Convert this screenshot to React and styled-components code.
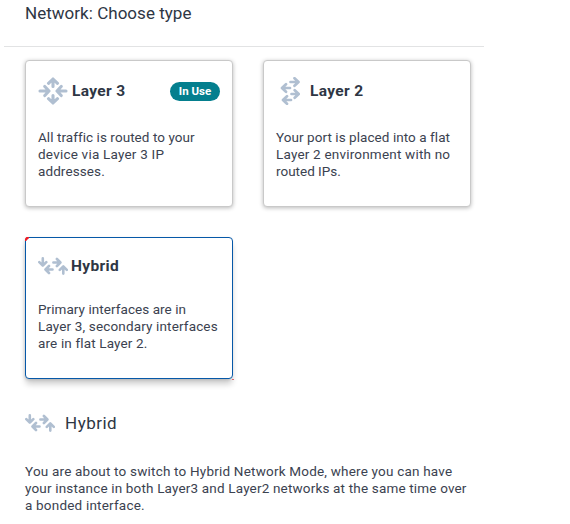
import React from "react";
import styled, { createGlobalStyle } from "styled-components";

const GlobalStyle = createGlobalStyle`
  * { box-sizing: border-box; }
  body {
    margin: 0;
    background: #fff;
    color: #2e3644;
    font-family: Roboto, "Liberation Sans", sans-serif;
    overflow: hidden;
  }
  h1, h2, h3, p { margin: 0; }
`;

const Page = styled.main`
  width: 570px;
  height: 524px;
  overflow: hidden;
`;

const Header = styled.header`
  width: 480px;
  height: 47px;
  margin-left: 4px;
  padding: 3px 0 0 21px;
  border-bottom: 1px solid #e2e3e4;
`;

const Title = styled.h1`
  font-size: 17px;
  font-weight: 400;
  line-height: 20px;
  letter-spacing: 0.03px;
`;

const CardGrid = styled.section`
  display: grid;
  grid-template-columns: 208px 208px;
  grid-template-rows: 147px 142px;
  gap: 30px;
  padding: 13px 0 0 25px;
`;

const Card = styled.article`
  position: relative;
  padding: ${(p) => (p.$selected ? "12px" : "14px")} 12px 0;
  border: 1px solid ${(p) => (p.$selected ? "#0658a8" : "#c9c9c9")};
  border-radius: 4px;
  background: #fff;
  box-shadow: ${(p) =>
    p.$selected ? "0 6px 6px -1px rgba(0,0,0,.2), -1px 1px 3px rgba(0,0,0,.12)" : "0 1px 4px rgba(0,0,0,.28)"};
`;

const CornerMark = styled.svg`
  position: absolute;
  width: 4px;
  height: 4px;
  ${(p) => (p.$end ? "right: -2px; bottom: -2px;" : "left: -1px; top: -1px;")}
`;

const CardHeader = styled.div`
  display: flex;
  align-items: center;
  height: 32px;
  padding-left: ${(p) => p.$indent || 0}px;
`;

const CardTitle = styled.h2`
  margin-left: ${(p) => p.$gap}px;
  font-size: 15.5px;
  font-weight: 700;
  line-height: 20px;
  letter-spacing: ${(p) => p.$spacing}px;
`;

const Badge = styled.span`
  display: flex;
  align-items: center;
  justify-content: center;
  width: 50px;
  height: 19px;
  margin-left: auto;
  border-radius: 10px;
  background: #047f8e;
  color: #fff;
  font-size: 11.5px;
  font-weight: 700;
`;

const Copy = styled.p`
  margin-top: ${(p) => p.$top}px;
  color: #3b4250;
  font-size: 13.5px;
  line-height: 17px;
`;

const Line = styled.span`
  display: block;
  width: max-content;
  white-space: nowrap;
  letter-spacing: ${(p) => p.$spacing}px;
`;

const Details = styled.section`
  padding: 28px 0 0 25px;
`;

const DetailsHeader = styled.div`
  display: flex;
  align-items: center;
  height: 32px;
`;

const DetailsTitle = styled.h2`
  margin-left: 10px;
  font-size: 17px;
  font-weight: 400;
  line-height: 20px;
  letter-spacing: 0.5px;
`;

const Glyph = styled.svg`
  flex: none;
  fill: none;
  stroke: #b0bfd1;
  stroke-width: ${(p) => p.$weight || 3.1};
  stroke-linecap: round;
  stroke-linejoin: round;
`;

const RoutedIcon = () => (
  <Glyph width="30" height="28" viewBox="0 0 30 28">
    <path d="M15 9.5V2.5M10.5 6.3L15 2l4.5 4.3M15 18.5v7M10.5 21.7L15 26l4.5-4.3M2 14h8M6.8 9.5l4.2 4.5-4.2 4.5M28 14h-8M23.2 9.5L19 14l4.2 4.5" />
  </Glyph>
);

const SwitchedIcon = () => (
  <Glyph width="20" height="28" viewBox="0 0 20 28" $weight={2.7}>
    <path d="M10.5 5h7.5M14.5 1.2L18.5 5l-4 3.8M10 11H2.5M6 7.2L2 11l4 3.8M11.5 17h7M14.7 13.2l4 3.8-4 3.8M11 23H3.5M7 19.2L3 23l4 3.8" />
  </Glyph>
);

const HybridIcon = () => (
  <Glyph width="30" height="18" viewBox="0 0 30 18" $weight={2.6}>
    <path d="M4.8 1.4v7M1.3 5.2l3.5 3.5 3.5-3.5M14.5 12.5H8.2M11 9L7.5 12.5 11 16M15.4 5.5h6.5M18.9 2l3.5 3.5L18.9 9M25.3 16.6V9.6M21.8 12.9l3.5-3.5 3.5 3.5" />
  </Glyph>
);

const Lines = ({ items, top }) => (
  <Copy $top={top}>
    {items.map(([text, spacing]) => (
      <Line key={text} $spacing={spacing}>{text}</Line>
    ))}
  </Copy>
);

export default function App() {
  return (
    <Page>
      <GlobalStyle />
      <Header>
        <Title>Network: Choose type</Title>
      </Header>
      <CardGrid>
        <Card>
          <CardHeader>
            <RoutedIcon />
            <CardTitle $gap={4} $spacing={0.35}>Layer 3</CardTitle>
            <Badge>In Use</Badge>
          </CardHeader>
          <Lines top={22} items={[["All traffic is routed to your", 0.06], ["device via Layer 3 IP", 0.22], ["addresses.", 0.1]]} />
        </Card>
        <Card>
          <CardHeader $indent={4}>
            <SwitchedIcon />
            <CardTitle $gap={10} $spacing={0.35}>Layer 2</CardTitle>
          </CardHeader>
          <Lines top={22} items={[["Your port is placed into a flat", 0.06], ["Layer 2 environment with no", 0.2], ["routed IPs.", 0]]} />
        </Card>
        <Card $selected>
          <CornerMark viewBox="0 0 4 4"><path d="M0 4V1.5L1.5 0H4V1L1 4Z" fill="#ee1c25" /></CornerMark>
          <CornerMark $end viewBox="0 0 4 4"><path d="M2 3h2v1H2Z" fill="#d86a70" /></CornerMark>
          <CardHeader>
            <HybridIcon />
            <CardTitle $gap={3} $spacing={0.35}>Hybrid</CardTitle>
          </CardHeader>
          <Lines top={19} items={[["Primary interfaces are in", 0.06], ["Layer 3, secondary interfaces", 0.15], ["are in flat Layer 2.", 0.15]]} />
        </Card>
      </CardGrid>
      <Details>
        <DetailsHeader>
          <HybridIcon />
          <DetailsTitle>Hybrid</DetailsTitle>
        </DetailsHeader>
        <Lines top={24} items={[
          ["You are about to switch to Hybrid Network Mode, where you can have", 0.2],
          ["your instance in both Layer3 and Layer2 networks at the same time over", 0.17],
          ["a bonded interface.", 0.2],
        ]} />
      </Details>
    </Page>
  );
}
